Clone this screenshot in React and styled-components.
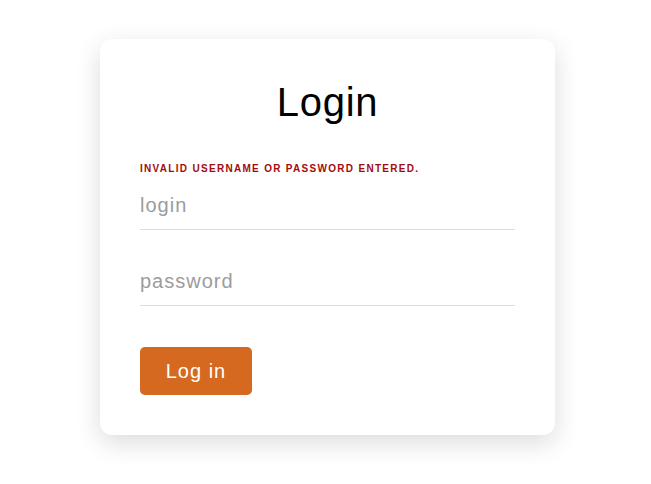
import React from "react";
import styled, { createGlobalStyle } from "styled-components";

const Global = createGlobalStyle`
  html, body { margin: 0; padding: 0; background: #ffffff; }
  body { font-family: "Liberation Sans", Arial, sans-serif; }
  * { box-sizing: border-box; }
`;

const Page = styled.div`
  display: flex;
  justify-content: center;
  padding: 39px 0 40px 4px;
`;

const Card = styled.form`
  width: 455px;
  background: #fff;
  border-radius: 12px;
  box-shadow: 0 8px 26px rgba(0, 0, 0, 0.14);
  padding: 40px 40px 40px;
  display: flex;
  flex-direction: column;
`;

const Title = styled.h1`
  margin: 0;
  font-size: 40px;
  font-weight: 400;
  line-height: 46px;
  letter-spacing: 0.7px;
  color: #000;
  text-align: center;
`;

const Error = styled.div`
  margin-top: 38px;
  font-size: 10px;
  line-height: 12px;
  font-weight: 700;
  letter-spacing: 1.3px;
  text-transform: uppercase;
  color: #a30c0c;
`;

const Field = styled.input`
  display: block;
  width: 100%;
  margin-top: ${(p) => p.$gap}px;
  padding: 8px 0 12px;
  border: none;
  border-bottom: 1px solid #dddddd;
  outline: none;
  font-family: "Liberation Sans", Arial, sans-serif;
  font-size: 20px;
  line-height: 24px;
  letter-spacing: 1px;
  color: #333;
  background: transparent;
  &::placeholder { color: #9c9c9c; }
`;

const Button = styled.button`
  align-self: flex-start;
  margin-top: 41px;
  width: 112px;
  height: 48px;
  border: none;
  border-radius: 5px;
  background: #d4691f;
  color: #fff;
  font-family: "Liberation Sans", Arial, sans-serif;
  font-size: 20px;
  letter-spacing: 1px;
  cursor: pointer;
`;

export default function App() {
  return (
    <>
      <Global />
      <Page>
        <Card onSubmit={(e) => e.preventDefault()}>
          <Title>Login</Title>
          <Error>Invalid username or password entered.</Error>
          <Field $gap={10} type="text" placeholder="login" />
          <Field $gap={31} type="password" placeholder="password" />
          <Button type="submit">Log in</Button>
        </Card>
      </Page>
    </>
  );
}
